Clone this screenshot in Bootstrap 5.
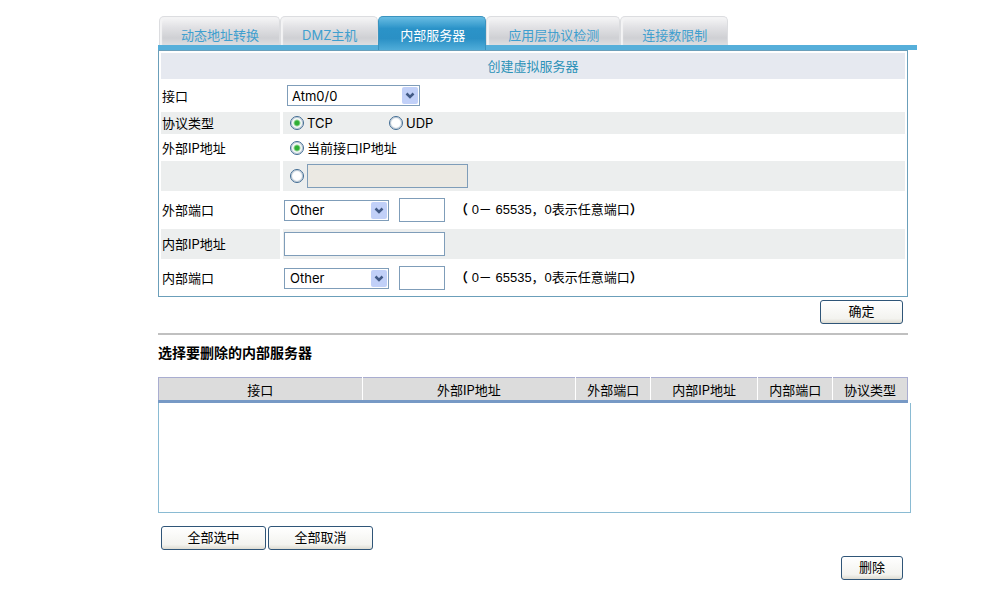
<!DOCTYPE html>
<html lang="zh-CN">
<head>
<meta charset="utf-8">
<meta name="viewport" content="width=device-width, initial-scale=1">
<title>内部服务器</title>
<link href="https://cdn.jsdelivr.net/npm/bootstrap@5.3.0/dist/css/bootstrap.min.css" rel="stylesheet">
<style>
  body { font: 13px/18px Inter, "Noto Sans CJK SC", sans-serif; color: #000; background: #fff; }
  .page { padding: 16px 74px 8px 158px; }
  .content { margin-right: 9px; }

  /* tabs */
  .tabs { border-bottom: 5px solid #56afda; padding-left: 1px; }
  .tabs .nav-link {
    padding: 9px 20px 0 21px; height: 29px; line-height: 18px; color: #3f9fcf;
    border: 1px solid #dcdde0; border-bottom: 0; border-radius: 5px 5px 0 0;
    background: linear-gradient(#f6f6f7, #e2e2e5 35%, #cfd0d4 75%, #dddee1);
    box-shadow: inset 2px 2px 1px #f3f3f4;
  }
  .tabs .nav-link.active {
    height: 34px; margin-bottom: -5px; color: #fff; border-color: #3a93bf;
    background: linear-gradient(#69bde3, #2b93c8 35%, #2a90c5 65%, #50add9);
    box-shadow: none;
  }

  /* form */
  .panel { border: 1px solid #6b9fba; padding: 2px 2px 0; gap: 1px; }
  .panel-title { background: #e6e9f0; color: #2c92b8; height: 26px; }
  .field { gap: 3px; min-height: 22px; }
  .field-name { width: 119px; flex: none; padding-left: 1px; }
  .field-body { flex: 1; padding-left: 1px; }
  .field-body.inset { padding-left: 4px; }
  .field-body.options { padding-left: 7px; }
  .shaded > * { background: #eceeee; }
  .h-short { height: 25px; } .h-mid { height: 30px; } .h-select { height: 31px; } .h-tall { height: 36px; }
  .box { border: 1px solid #7f9db9; border-radius: 0; background-color: #fff; color: #000; padding: 0 6px; height: 24px; }
  .box:disabled { background-color: #ebe9e3; }
  .w-port { width: 46px; margin-left: 10px; }
  .w-ip { width: 161px; }
  select.drop {
    appearance: none; height: 21px; width: 105px; padding: 0 20px 0 5px;
    background: #fff url("data:image/svg+xml,%3Csvg xmlns='http://www.w3.org/2000/svg' width='16' height='17'%3E%3Crect width='16' height='17' rx='2' fill='%23c1d0f8'/%3E%3Cpath d='M4.5 6.5 8 10l3.5-3.5' fill='none' stroke='%23425a86' stroke-width='2.5'/%3E%3C/svg%3E") right 1px center no-repeat;
  }
  select.drop-wide { width: 133px; padding-left: 4px; }
  .dot { appearance: none; width: 14px; height: 14px; margin: 0 3px 0 0; border: 1px solid #3f6a92; border-radius: 50%; background: #fff; box-shadow: inset 0 0 1px 1px #b9c6d2; }
  .dot:checked { background: radial-gradient(circle, #2fae35 0 2px, #fff 4px); }
  .choice { width: 99px; }
  .hint { margin-left: 10px; font-family: "Liberation Sans", "Noto Sans CJK SC", sans-serif; }

  /* buttons */
  .push {
    height: 24px; padding: 0 0 3px; line-height: 18px; border: 1px solid #2f5578; border-radius: 3px; color: #000;
    background: linear-gradient(#fff, #f3f3ef 80%, #dedcd2);
  }
  .w-select { width: 105px; } .w-ok { width: 83px; } .w-delete { width: 62px; }
  .confirm { padding: 3px 5px 9px 0; }
  .choose { padding: 13px 0 6px 3px; gap: 2px; }
  .remove { padding-right: 5px; }

  /* server list */
  .rule { border-top: 2px solid #c0c0c0; margin-bottom: 9px; }
  .list-title { font-size: 14px; line-height: 18px; margin-bottom: 15px; }
  .heads { border: 1px solid #a9add0; border-bottom: 3px solid #7799c5; table-layout: fixed; }
  .heads th { background: #dcdcdc; height: 24px; font-weight: 400; text-align: center; padding: 3px 0 1px; }
  .heads th + th { border-left: 1px solid #fff; }
  .rows { display: block; width: calc(100% - 6px); height: 110px; border: 1px solid #8abbd3; border-top: 0; border-radius: 0; overflow: auto; }
</style>
<script src="https://cdn.jsdelivr.net/npm/bootstrap@5.3.0/dist/js/bootstrap.bundle.min.js"></script>
</head>
<body>
<main class="page">
  <nav class="nav tabs flex-nowrap text-nowrap">
    <a class="nav-link" href="#">动态地址转换</a>
    <a class="nav-link" href="#">DMZ主机</a>
    <a class="nav-link active" aria-current="page" href="#">内部服务器</a>
    <a class="nav-link" href="#">应用层协议检测</a>
    <a class="nav-link" href="#">连接数限制</a>
  </nav>

  <form class="content">
    <div class="panel d-flex flex-column">
      <div class="panel-title d-flex align-items-center justify-content-center">创建虚拟服务器</div>
      <div class="field h-select d-flex">
        <label class="field-name d-flex align-items-center" for="iface">接口</label>
        <div class="field-body inset d-flex align-items-center">
          <select class="box drop drop-wide" id="iface"><option>Atm0/0</option></select>
        </div>
      </div>
      <div class="field shaded d-flex" role="radiogroup" aria-labelledby="proto">
        <div class="field-name d-flex align-items-center" id="proto">协议类型</div>
        <div class="field-body options d-flex align-items-center">
          <label class="choice d-flex align-items-center"><input class="dot" type="radio" name="proto" checked>TCP</label>
          <label class="choice d-flex align-items-center"><input class="dot" type="radio" name="proto">UDP</label>
        </div>
      </div>
      <div class="field h-short d-flex">
        <div class="field-name d-flex align-items-center">外部IP地址</div>
        <div class="field-body options d-flex align-items-center">
          <label class="d-flex align-items-center"><input class="dot" type="radio" name="ext" checked>当前接口IP地址</label>
        </div>
      </div>
      <div class="field h-mid shaded d-flex">
        <div class="field-name"></div>
        <div class="field-body options d-flex align-items-center">
          <input class="dot" type="radio" name="ext" aria-label="指定外部IP地址">
          <input class="box w-ip" type="text" aria-label="外部IP地址" disabled>
        </div>
      </div>
      <div class="field h-tall d-flex">
        <label class="field-name d-flex align-items-center" for="extport">外部端口</label>
        <div class="field-body d-flex align-items-center">
          <select class="box drop" id="extport"><option>Other</option></select>
          <input class="box w-port" type="text" aria-label="外部端口号">
          <span class="hint"><b>（</b> 0－ 65535，0表示任意端口<b>）</b></span>
        </div>
      </div>
      <div class="field h-mid shaded d-flex">
        <label class="field-name d-flex align-items-center" for="intip">内部IP地址</label>
        <div class="field-body d-flex align-items-center"><input class="box w-ip" type="text" id="intip"></div>
      </div>
      <div class="field h-tall d-flex">
        <label class="field-name d-flex align-items-center" for="intport">内部端口</label>
        <div class="field-body d-flex align-items-center">
          <select class="box drop" id="intport"><option>Other</option></select>
          <input class="box w-port" type="text" aria-label="内部端口号">
          <span class="hint"><b>（</b> 0－ 65535，0表示任意端口<b>）</b></span>
        </div>
      </div>
    </div>
    <div class="confirm d-flex justify-content-end"><button class="push w-ok" type="button">确定</button></div>
  </form>

  <section class="content">
    <div class="rule"></div>
    <h2 class="list-title fw-bold">选择要删除的内部服务器</h2>
    <table class="heads w-100">
      <colgroup><col style="width:27.2%"><col style="width:28.5%"><col style="width:10%"><col style="width:14.3%"><col style="width:10%"><col style="width:10%"></colgroup>
      <thead><tr><th>接口</th><th>外部IP地址</th><th>外部端口</th><th>内部IP地址</th><th>内部端口</th><th>协议类型</th></tr></thead>
    </table>
  </section>
  <select class="rows" multiple aria-label="内部服务器"></select>
  <div class="content">
    <div class="choose d-flex">
      <button class="push w-select" type="button">全部选中</button>
      <button class="push w-select" type="button">全部取消</button>
    </div>
    <div class="remove d-flex justify-content-end"><button class="push w-delete" type="button">删除</button></div>
  </div>
</main>
</body>
</html>
